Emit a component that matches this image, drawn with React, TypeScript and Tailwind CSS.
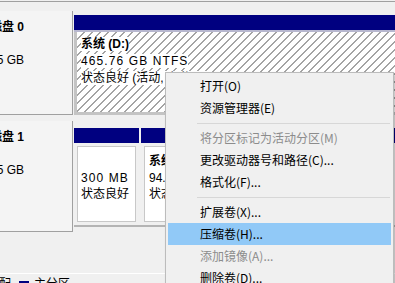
const hatch =
  "bg-[repeating-linear-gradient(135deg,#ffffff_0px,#ffffff_4.6px,#a4a4a4_4.6px,#a4a4a4_5.66px)]";

const DiskLabel = ({ name, size }: { name: string; size: string }) => (
  <div className="flex h-full w-[73px] shrink-0 flex-col border-r border-b border-[#a0a0a0] bg-[#f4f4f4] pt-[8px]">
    <div className="flex w-[24px] justify-end whitespace-nowrap font-bold leading-[17px]">
      <span>{name}</span>
    </div>
    <div className="mt-[16px] flex w-[24px] justify-end whitespace-nowrap leading-[17px]">
      <span>{size}</span>
    </div>
  </div>
);

type MenuEntry = { label?: string; disabled?: boolean; active?: boolean; sep?: boolean };

const menu: MenuEntry[] = [
  { label: "打开(O)" },
  { label: "资源管理器(E)" },
  { sep: true },
  { label: "将分区标记为活动分区(M)", disabled: true },
  { label: "更改驱动器号和路径(C)..." },
  { label: "格式化(F)..." },
  { sep: true },
  { label: "扩展卷(X)..." },
  { label: "压缩卷(H)...", active: true },
  { label: "添加镜像(A)...", disabled: true },
  { label: "删除卷(D)..." },
];

export default function App() {
  return (
    <div className="relative h-[283px] w-[395px] overflow-hidden bg-[#f0f0f0] text-[12px] text-black [font-family:'Liberation_Sans','Noto_Sans_CJK_SC',sans-serif]">
      {/* top edge of the previous pane */}
      <div className="h-[11px] pt-[1px]">
        <div className="border-t border-[#a0a0a0]" />
      </div>

      {/* disk 0 */}
      <div className="flex h-[104px]">
        <DiskLabel name="磁盘 0" size="465.75 GB" />
        <div className="ml-[1px] flex flex-1 flex-col pt-[4px]">
          <div className="h-[15px] bg-[#000080]" />
          <div className="h-[2px] bg-[#b8b8d0]" />
          <div className={`flex-1 border-b-[3px] border-l-[3px] border-[#c4c4c4] pl-[4px] pt-[4px] leading-[17px] ${hatch}`}>
            <div>
              <span className="bg-white font-bold">系统 (D:)</span>
            </div>
            <div>
              <span className="bg-white tracking-[1.1px]">465.76 GB NTFS</span>
            </div>
            <div>
              <span className="bg-white">状态良好 (活动, 主分区)</span>
            </div>
          </div>
        </div>
      </div>

      {/* disk 1 */}
      <div className="mt-[6px] flex h-[111px]">
        <DiskLabel name="磁盘 1" size="931.45 GB" />
        <div className="ml-[1px] flex flex-1 flex-col pt-[7px]">
          <div className="flex h-[99px] gap-[2px] border-b-2 border-[#b4b4b4]">
            <div className="flex w-[65px] flex-col">
              <div className="h-[15px] bg-[#000080]" />
              <div className="flex-1 p-[3px]">
                <div className="h-full border border-[#c8c8c8] bg-white pl-[3px] pt-[6px] leading-[16.5px]">
                  <div>&nbsp;</div>
                  <div className="tracking-[1.1px]">300 MB</div>
                  <div>状态良好</div>
                </div>
              </div>
            </div>
            <div className="flex flex-1 flex-col">
              <div className="h-[15px] bg-[#000080]" />
              <div className="flex-1 p-[3px]">
                <div className="h-full whitespace-nowrap border border-[#c8c8c8] bg-white pl-[4px] pt-[6px] leading-[16.5px]">
                  <div className="font-bold">系统 (C:)</div>
                  <div>94.43 GB NTFS</div>
                  <div>状态良好 (启动, 主分区)</div>
                </div>
              </div>
            </div>
          </div>
        </div>
      </div>

      {/* legend */}
      <div className="mt-[41px] flex items-center border-t border-white pt-[3px] leading-[14px]">
        <div className="flex w-[11px] justify-end whitespace-nowrap">
          <span>未分配</span>
        </div>
        <div className="ml-[8px] mt-[3px] h-[10px] w-[10px] bg-[#000080]" />
        <span className="ml-[5px]">主分区</span>
      </div>

      {/* context menu */}
      <div className="absolute left-[165px] top-[72px] w-[229px] border border-[#bcbcbc] bg-[#f0f0f0] p-[2px] shadow-[2px_2px_3px_rgba(0,0,0,0.25)] [font-family:'Noto_Sans_CJK_SC',sans-serif]">
        {menu.map((item, i) =>
          item.sep ? (
            <div key={i} className="flex h-[8px] items-center pl-[29px] pr-[1px]">
              <div className="h-px w-full bg-[#d7d7d7]" />
            </div>
          ) : (
            <div
              key={i}
              className={`flex h-[22px] items-center whitespace-nowrap pl-[32px] ${
                item.active ? "bg-[#91c9f7]" : ""
              } ${item.disabled ? "text-[#8c8c8c]" : "text-black"}`}
            >
              {item.label}
            </div>
          )
        )}
      </div>
    </div>
  );
}
